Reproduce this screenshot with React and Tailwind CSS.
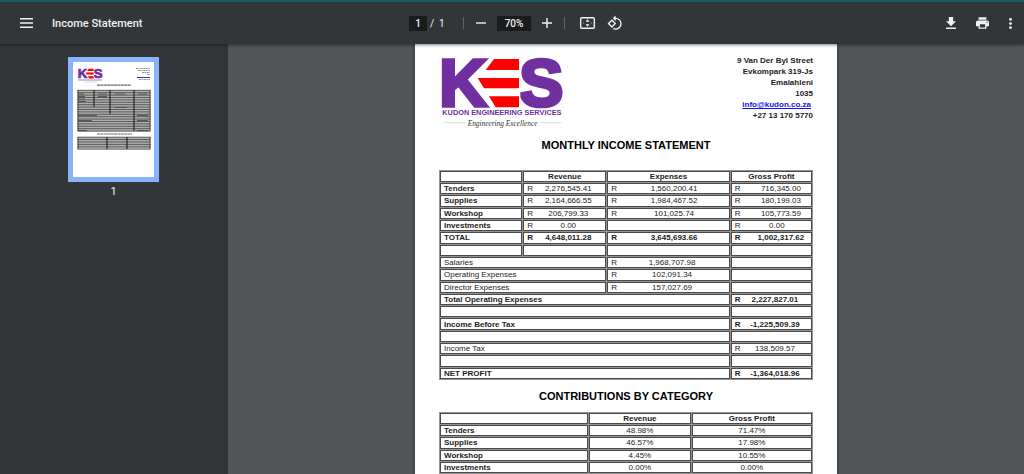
import { useState } from "react";

const incomeRows = [
  {
    label: "Tenders",
    bold: true,
    cells: [
      { value: "2,276,545.41", pad: "w-1" },
      { value: "1,560,200.41", pad: "w-2" },
      { value: "716,345.00", pad: "w-4" },
    ],
  },
  {
    label: "Supplies",
    bold: true,
    cells: [
      { value: "2,164,666.55", pad: "w-1" },
      { value: "1,984,467.52", pad: "w-2" },
      { value: "180,199.03", pad: "w-4" },
    ],
  },
  {
    label: "Workshop",
    bold: true,
    cells: [
      { value: "206,799.33", pad: "w-1" },
      { value: "101,025.74", pad: "w-2" },
      { value: "105,773.59", pad: "w-4" },
    ],
  },
  {
    label: "Investments",
    bold: true,
    cells: [{ value: "0.00", pad: "w-1" }, null, { value: "0.00", pad: "w-2" }],
  },
  {
    label: "TOTAL",
    bold: true,
    boldValues: true,
    cells: [
      { value: "4,648,011.28", pad: "w-1" },
      { value: "3,645,693.66", pad: "w-2" },
      { value: "1,002,317.62", pad: "w-4" },
    ],
  },
  { label: "", cells: [null, null, null] },
  { label: "Salaries", span: 2, cells: [{ value: "1,968,707.98", pad: "w-1" }, null] },
  { label: "Operating Expenses", span: 2, cells: [{ value: "102,091.34", pad: "w-1" }, null] },
  { label: "Director Expenses", span: 2, cells: [{ value: "157,027.69", pad: "w-1" }, null] },
  {
    label: "Total Operating Expenses",
    span: 3,
    bold: true,
    boldValues: true,
    cells: [{ value: "2,227,827.01", pad: "w-1" }],
  },
  { label: "", span: 3, cells: [null] },
  {
    label: "Income Before Tax",
    span: 3,
    bold: true,
    boldValues: true,
    cells: [{ value: "-1,225,509.39", pad: "w-1" }],
  },
  { label: "", span: 3, cells: [null] },
  { label: "Income Tax", span: 3, cells: [{ value: "138,509.57", pad: "w-1" }] },
  { label: "", span: 3, cells: [null] },
  {
    label: "NET PROFIT",
    span: 3,
    bold: true,
    boldValues: true,
    cells: [{ value: "-1,364,018.96", pad: "w-1" }],
  },
];

const contributionRows = [
  { label: "Tenders", revenue: "48.98%", profit: "71.47%" },
  { label: "Supplies", revenue: "46.57%", profit: "17.98%" },
  { label: "Workshop", revenue: "4.45%", profit: "10.55%" },
  { label: "Investments", revenue: "0.00%", profit: "0.00%" },
];

const cellClass = "border border-[#4a4a4a] bg-white p-0 align-middle";
const tableClass =
  "w-full table-fixed border-separate border-spacing-px bg-[#949494] text-[8px] leading-[9px] text-[#1c1c1c]";

const LogoMark = () => (
  <>
    <g
      fill="#7030a0"
      stroke="#7030a0"
      strokeWidth="11"
      fontFamily="Liberation Sans, Arial, sans-serif"
      fontWeight="700"
    >
      <text x="28" y="182" fontSize="198">
        K
      </text>
      <text x="268" y="182" fontSize="198">
        S
      </text>
    </g>
    <path d="M184 34 L136 99 L196 192 L271 192 L271 34 Z" fill="#fff" />
    <g fill="#fe0000">
      <path d="M192 42 H267 V75 H167 Z" />
      <path d="M143 99 H267 V130 H162 Z" />
      <path d="M177 154 H267 V187 H197 Z" />
    </g>
  </>
);

const Logo = () => (
  <svg
    viewBox="27 30 378 222"
    className="h-[74px] w-[126px] overflow-visible"
    role="img"
    aria-label="KES"
  >
    <LogoMark />
    <text
      x="37"
      y="211"
      fontSize="22"
      fontWeight="700"
      fill="#7030a0"
      fontFamily="Liberation Sans, Arial, sans-serif"
    >
      KUDON ENGINEERING SERVICES
    </text>
    <path d="M44 233 H108 M330 233 H394" stroke="#ccc" strokeWidth="2" />
    <text
      x="113"
      y="242"
      fontSize="22"
      fontStyle="italic"
      fill="#333"
      fontFamily="Liberation Serif, Times New Roman, serif"
    >
      Engineering Excellence
    </text>
  </svg>
);

const Money = ({ cell }) => {
  if (!cell) {
    return null;
  }
  return (
    <div className="flex pl-[3px]">
      <span className={`shrink-0 ${cell.pad}`}>R</span>
      <span className="flex-1 text-center">{cell.value}</span>
    </div>
  );
};

const IncomeTable = () => (
  <table className={`${tableClass} h-[210px]`}>
    <colgroup>
      <col className="w-[22.3%]" />
      <col className="w-[22.5%]" />
      <col className="w-[33.2%]" />
      <col className="w-[22%]" />
    </colgroup>
    <thead>
      <tr className="h-[11px]">
        <td className={cellClass} />
        <th className={cellClass}>Revenue</th>
        <th className={cellClass}>Expenses</th>
        <th className={cellClass}>Gross Profit</th>
      </tr>
    </thead>
    <tbody>
      {incomeRows.map((row, i) => (
        <tr key={i} className="h-[11px]">
          <th
            scope="row"
            colSpan={row.span || 1}
            className={`${cellClass} text-left ${row.bold ? "font-bold" : "font-normal"}`}
          >
            <div className="pl-[3px]">{row.label}</div>
          </th>
          {row.cells.map((cell, j) => (
            <td key={j} className={`${cellClass} ${row.boldValues ? "font-bold" : ""}`}>
              <Money cell={cell} />
            </td>
          ))}
        </tr>
      ))}
    </tbody>
  </table>
);

const ContributionTable = () => (
  <table className={`${tableClass} h-[62px]`}>
    <colgroup>
      <col className="w-[40%]" />
      <col className="w-[27.5%]" />
      <col className="w-[32.5%]" />
    </colgroup>
    <thead>
      <tr>
        <td className={cellClass} />
        <th className={cellClass}>Revenue</th>
        <th className={cellClass}>Gross Profit</th>
      </tr>
    </thead>
    <tbody>
      {contributionRows.map((row) => (
        <tr key={row.label}>
          <th scope="row" className={`${cellClass} text-left`}>
            <div className="pl-[3px]">{row.label}</div>
          </th>
          <td className={`${cellClass} text-center`}>{row.revenue}</td>
          <td className={`${cellClass} text-center`}>{row.profit}</td>
        </tr>
      ))}
    </tbody>
  </table>
);

// small preview of the page, drawn as lines and blocks
const Thumbnail = () => (
  <svg viewBox="0 0 81 115" className="block h-[115px] w-[81px] bg-white" aria-hidden="true">
    <svg x="5" y="5" width="25" height="13" viewBox="32 34 374 160" className="overflow-visible">
      <LogoMark />
    </svg>
    <path d="M5 18 H29" stroke="#a583c4" />
    <path d="M11 20 H24" stroke="#ddd" />
    <path
      d="M63 6.500 H77 M65 8.500 H77 M69 10.500 H77 M74 12.500 H77 M66 17.500 H77"
      stroke="#999"
      strokeDasharray="2 .5"
    />
    <path d="M64 15.500 H77" stroke="#2a2af0" />
    <path d="M24 23.200 H58 M24 72 H59" stroke="#666" strokeWidth="1.200" strokeDasharray="3 .4" />
    <rect x="4.500" y="28" width="73" height="41.500" fill="#b0b0b0" />
    <rect x="4.500" y="75" width="73" height="12" fill="#b0b0b0" />
    {Array.from({ length: 18 }, (_, i) => (
      <path key={i} d={`M4.500 ${28.3 + i * 2.4} H77.500`} stroke="#333" strokeWidth=".7" />
    ))}
    {Array.from({ length: 6 }, (_, i) => (
      <path key={i} d={`M4.500 ${75.2 + i * 2.4} H77.500`} stroke="#333" strokeWidth=".7" />
    ))}
    <path d="M21 28 V45 M37 28 V52 M61 28 V69 M34 75 V87 M54 75 V87" stroke="#111" />
    <path d="M5 28 V69 M77 28 V69 M5 75 V87 M77 75 V87" stroke="#333" strokeWidth=".8" />
    <path
      d="M5 32 H11 M5 34.500 H12 M5 37 H12 M5 39.500 H13 M5 53.500 H24 M5 58.500 H19 M5 68.500 H14 M25 32 H34 M25 34.500 H34 M42 32 H52 M65 32 H74 M42 45.500 H54 M64 53.500 H75 M64 58.500 H75 M64 68.500 H75"
      stroke="#444"
      strokeWidth=".8"
    />
  </svg>
);

const iconButton = "flex items-center justify-center text-[#f1f1f1]";
const fieldClass = "h-[15px] bg-[#191b1c] text-center text-[10px] font-medium";

const Toolbar = ({ page, setPage, zoom, setZoom }) => (
  <header className="relative z-10 grid h-[42px] shrink-0 grid-cols-[1fr_auto_1fr] items-center bg-[#323639] pr-3 pl-5 text-[#f1f1f1] shadow-[0_1px_3px_rgba(0,0,0,0.5)]">
    <div className="flex items-center gap-[19px]">
      <button className={iconButton} aria-label="Menu">
        <svg viewBox="0 0 13 10" className="h-[10px] w-[13px]" fill="currentColor">
          <path d="M0 0h13v1.600H0zM0 4.200h13v1.600H0zM0 8.400h13v1.600H0z" />
        </svg>
      </button>
      <h1 className="pt-0.5 text-[11px] font-medium">Income Statement</h1>
    </div>
    <div className="flex items-center text-[10px]">
      <input
        aria-label="Page number"
        value={page}
        onChange={(e) => setPage(e.target.value)}
        className={`${fieldClass} w-[18px]`}
      />
      <span className="ml-[3px] w-[9px]">/</span>
      <span className="w-6">1</span>
      <span className="h-3 w-px bg-[#5f6366]" />
      <button
        className={`${iconButton} ml-3`}
        aria-label="Zoom out"
        onClick={() => setZoom("60%")}
      >
        <svg viewBox="0 0 10 10" className="size-[10px]" stroke="currentColor" strokeWidth="1.400">
          <path d="M0 5H10" />
        </svg>
      </button>
      <input
        aria-label="Zoom level"
        value={zoom}
        onChange={(e) => setZoom(e.target.value)}
        className={`${fieldClass} mx-[11px] w-[34px]`}
      />
      <button className={iconButton} aria-label="Zoom in" onClick={() => setZoom("80%")}>
        <svg viewBox="0 0 10 10" className="size-[10px]" stroke="currentColor" strokeWidth="1.400">
          <path d="M0 5H10M5 0V10" />
        </svg>
      </button>
      <span className="ml-3 h-3 w-px bg-[#5f6366]" />
      <button className={`${iconButton} ml-[15px]`} aria-label="Fit to page">
        <svg viewBox="0 0 15 12" className="h-3 w-[15px]" fill="none" stroke="currentColor">
          <rect x=".7" y=".7" width="13.600" height="10.600" rx="1" strokeWidth="1.400" />
          <path
            d="M7.500 2.300 9.500 4.700H5.500zM7.500 9.700 9.500 7.300H5.500z"
            fill="currentColor"
            stroke="none"
          />
          <path d="M3.500 5.500v1M11.500 5.500v1" strokeWidth=".6" />
        </svg>
      </button>
      <button className={`${iconButton} ml-3`} aria-label="Rotate">
        <svg viewBox="0 0 24 24" className="size-4" fill="currentColor">
          <path d="M7.340 6.410.860 12.900l6.490 6.480 6.490-6.480-6.500-6.490zM3.690 12.900l3.660-3.660L11 12.900l-3.660 3.660-3.650-3.660zm15.670-6.260A8.950 8.950 0 0 0 13 4V.760L8.760 5 13 9.240V6c1.790 0 3.580.680 4.950 2.050a7.007 7.007 0 0 1 0 9.900 6.973 6.973 0 0 1-7.790 1.440l-1.490 1.490C10.020 21.620 11.510 22 13 22c2.300 0 4.610-.880 6.360-2.640a8.980 8.980 0 0 0 0-12.720z" />
        </svg>
      </button>
    </div>
    <div className="flex items-center justify-end gap-5">
      <button className={iconButton} aria-label="Download">
        <svg viewBox="5 3 14 17" className="h-3 w-[10px]" fill="currentColor">
          <path d="M19 9h-4V3H9v6H5l7 7 7-7zM5 18v2h14v-2H5z" />
        </svg>
      </button>
      <button className={iconButton} aria-label="Print">
        <svg viewBox="2 3 20 18" className="h-3 w-[13px]" fill="currentColor">
          <path d="M19 8H5c-1.660 0-3 1.340-3 3v6h4v4h12v-4h4v-6c0-1.660-1.340-3-3-3zm-3 11H8v-5h8v5zm3-7c-.550 0-1-.450-1-1s.450-1 1-1 1 .450 1 1-.450 1-1 1zm-1-9H6v4h12V3z" />
        </svg>
      </button>
      <button className={iconButton} aria-label="More">
        <svg viewBox="10 4 4 16" className="h-[11px] w-[3px]" fill="currentColor">
          <circle cx="12" cy="6" r="2" />
          <circle cx="12" cy="12" r="2" />
          <circle cx="12" cy="18" r="2" />
        </svg>
      </button>
    </div>
  </header>
);

const App = () => {
  const [page, setPage] = useState("1");
  const [zoom, setZoom] = useState("70%");

  return (
    <div className="flex h-screen flex-col overflow-hidden border-t-2 border-[#0e6169] bg-[#525659] font-['Roboto',sans-serif]">
      <Toolbar page={page} setPage={setPage} zoom={zoom} setZoom={setZoom} />
      <div className="flex min-h-0 flex-1">
        <aside className="flex w-[228px] shrink-0 flex-col items-center bg-[#323639] pt-[13px] pr-px">
          <button className="border-[5px] border-[#8ab4f8]" aria-label="Page 1">
            <Thumbnail />
          </button>
          <span className="mt-1 text-[11px] leading-3 text-[#f1f1f1]">1</span>
        </aside>
        <main className="flex min-w-0 flex-1 justify-center overflow-hidden">
          <article className="h-[597px] w-[422px] shrink-0 bg-white px-6 pt-[11px] font-['Liberation_Sans',Arial,sans-serif] text-black shadow-[0_0_3px_rgba(0,0,0,0.5)]">
            <div className="flex items-start justify-between">
              <Logo />
              <address className="text-right text-[8px] leading-[11px] font-bold text-[#1c1c1c] not-italic">
                <p>9 Van Der Byl Street</p>
                <p>Evkompark 319-Js</p>
                <p>Emalahleni</p>
                <p>1035</p>
                <p>
                  <a href="mailto:info@kudon.co.za" className="mr-0.5 text-[#1414e6] underline">
                    info@kudon.co.za
                  </a>
                </p>
                <p>+27 13 170 5770</p>
              </address>
            </div>
            <h2 className="mt-2 mb-[17px] text-center text-[11px] leading-4 font-bold">
              MONTHLY INCOME STATEMENT
            </h2>
            <IncomeTable />
            <h2 className="my-2 text-center text-[11px] leading-4 font-bold">
              CONTRIBUTIONS BY CATEGORY
            </h2>
            <ContributionTable />
          </article>
        </main>
      </div>
    </div>
  );
};

export default App;
